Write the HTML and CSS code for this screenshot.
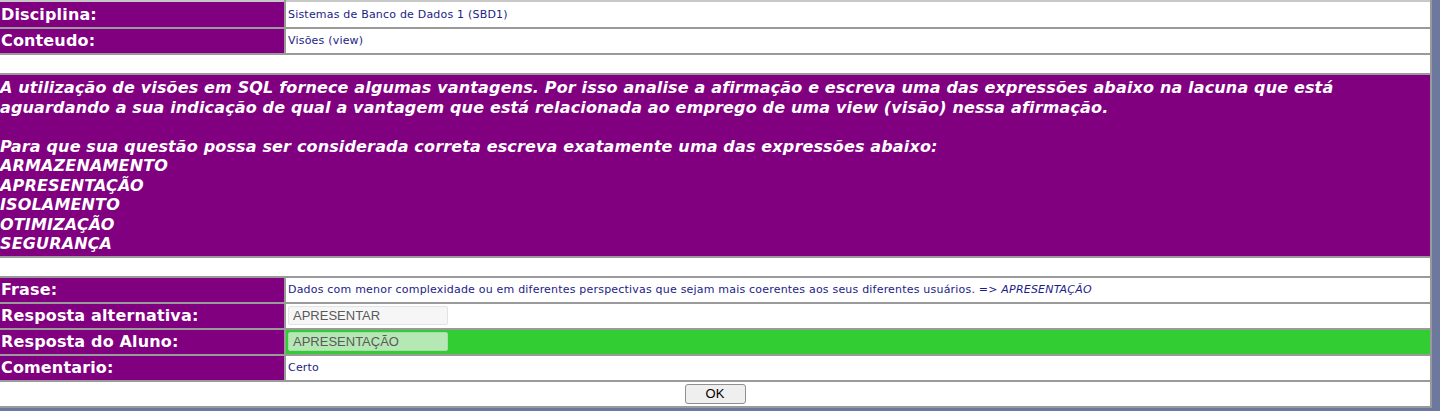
FILE: index.html
```html
<!DOCTYPE html>
<html lang="pt">
<head>
<meta charset="utf-8">
<title>Questão</title>
<link rel="stylesheet" href="styles.css">
</head>
<body>
<table class="quiz">
  <tr class="first">
    <td class="lbl">Disciplina:</td>
    <td class="val">Sistemas de Banco de Dados 1 (SBD1)</td>
  </tr>
  <tr>
    <td class="lbl">Conteudo:</td>
    <td class="val">Visões (view)</td>
  </tr>
  <tr><td class="spacer" colspan="2"></td></tr>
  <tr>
    <td class="statement" colspan="2">A utilização de visões em SQL fornece algumas vantagens. Por isso analise a afirmação e escreva uma das expressões abaixo na lacuna que está aguardando a sua indicação de qual a vantagem que está relacionada ao emprego de uma view (visão) nessa afirmação.<br><br>Para que sua questão possa ser considerada correta escreva exatamente uma das expressões abaixo:<br>ARMAZENAMENTO<br>APRESENTAÇÃO<br>ISOLAMENTO<br>OTIMIZAÇÃO<br>SEGURANÇA</td>
  </tr>
  <tr><td class="spacer" colspan="2"></td></tr>
  <tr>
    <td class="lbl">Frase:</td>
    <td class="val">Dados com menor complexidade ou em diferentes perspectivas que sejam mais coerentes aos seus diferentes usuários. =&gt; <i>APRESENTAÇÃO</i></td>
  </tr>
  <tr>
    <td class="lbl">Resposta alternativa:</td>
    <td class="val"><input class="answer" type="text" value="APRESENTAR" readonly></td>
  </tr>
  <tr>
    <td class="lbl">Resposta do Aluno:</td>
    <td class="val correct"><input class="answer answer-ok" type="text" value="APRESENTAÇÃO" readonly></td>
  </tr>
  <tr>
    <td class="lbl">Comentario:</td>
    <td class="val">Certo</td>
  </tr>
  <tr>
    <td class="actions" colspan="2"><button class="ok" type="button">OK</button></td>
  </tr>
</table>
</body>
</html>
```

FILE: styles.css
```css
html, body {
  margin: 0;
  padding: 0;
  background: #6c789e;
}

.quiz {
  width: 1432px;
  border-collapse: collapse;
  background: #ffffff;
  font-family: "DejaVu Sans", Verdana, sans-serif;
  border-top: 2px solid #c8c8c8;
}

.quiz td {
  padding: 0 2px;
  border-bottom: 2px solid #9a9a9a;
  border-right: 2px solid #9a9a9a;
  vertical-align: middle;
}

.lbl {
  width: 281px;
  height: 24px;
  background: #800080;
  color: #ffffff;
  font-size: 16px;
  font-weight: bold;
  line-height: 18px;
  letter-spacing: 0.15px;
  white-space: nowrap;
  padding-left: 1px !important;
}

.first .lbl {
  height: 25px;
}

.val {
  color: #1c1c88;
  font-size: 11px;
  line-height: 14px;
  letter-spacing: 0.2px;
}

.val i {
  font-style: italic;
}

.spacer {
  height: 18px;
}

.statement {
  background: #800080;
  color: #ffffff;
  font-size: 16px;
  font-weight: bold;
  font-style: italic;
  line-height: 19.5px;
  letter-spacing: 0.15px;
  padding: 3px 0 2px 0 !important;
}

.correct {
  background: #32cd32;
}

.answer {
  display: block;
  box-sizing: border-box;
  width: 160px;
  height: 19px;
  margin: 0;
  padding: 0 4px;
  border: 1px solid #e3e3e3;
  border-radius: 2px;
  background: #f6f6f6;
  color: #5a5a5a;
  font-family: "Liberation Sans", Arial, sans-serif;
  font-size: 13px;
  letter-spacing: 0;
  outline: none;
}

.answer-ok {
  background: #b6e8b6;
  border-color: #a8dca8;
}

.actions {
  height: 24px;
  text-align: center;
}

.ok {
  box-sizing: border-box;
  width: 61px;
  height: 20px;
  padding: 0;
  border: 1px solid #8f8f8f;
  border-radius: 3px;
  background: #efefef;
  color: #000000;
  font-family: "Liberation Sans", Arial, sans-serif;
  font-size: 13px;
}
```
